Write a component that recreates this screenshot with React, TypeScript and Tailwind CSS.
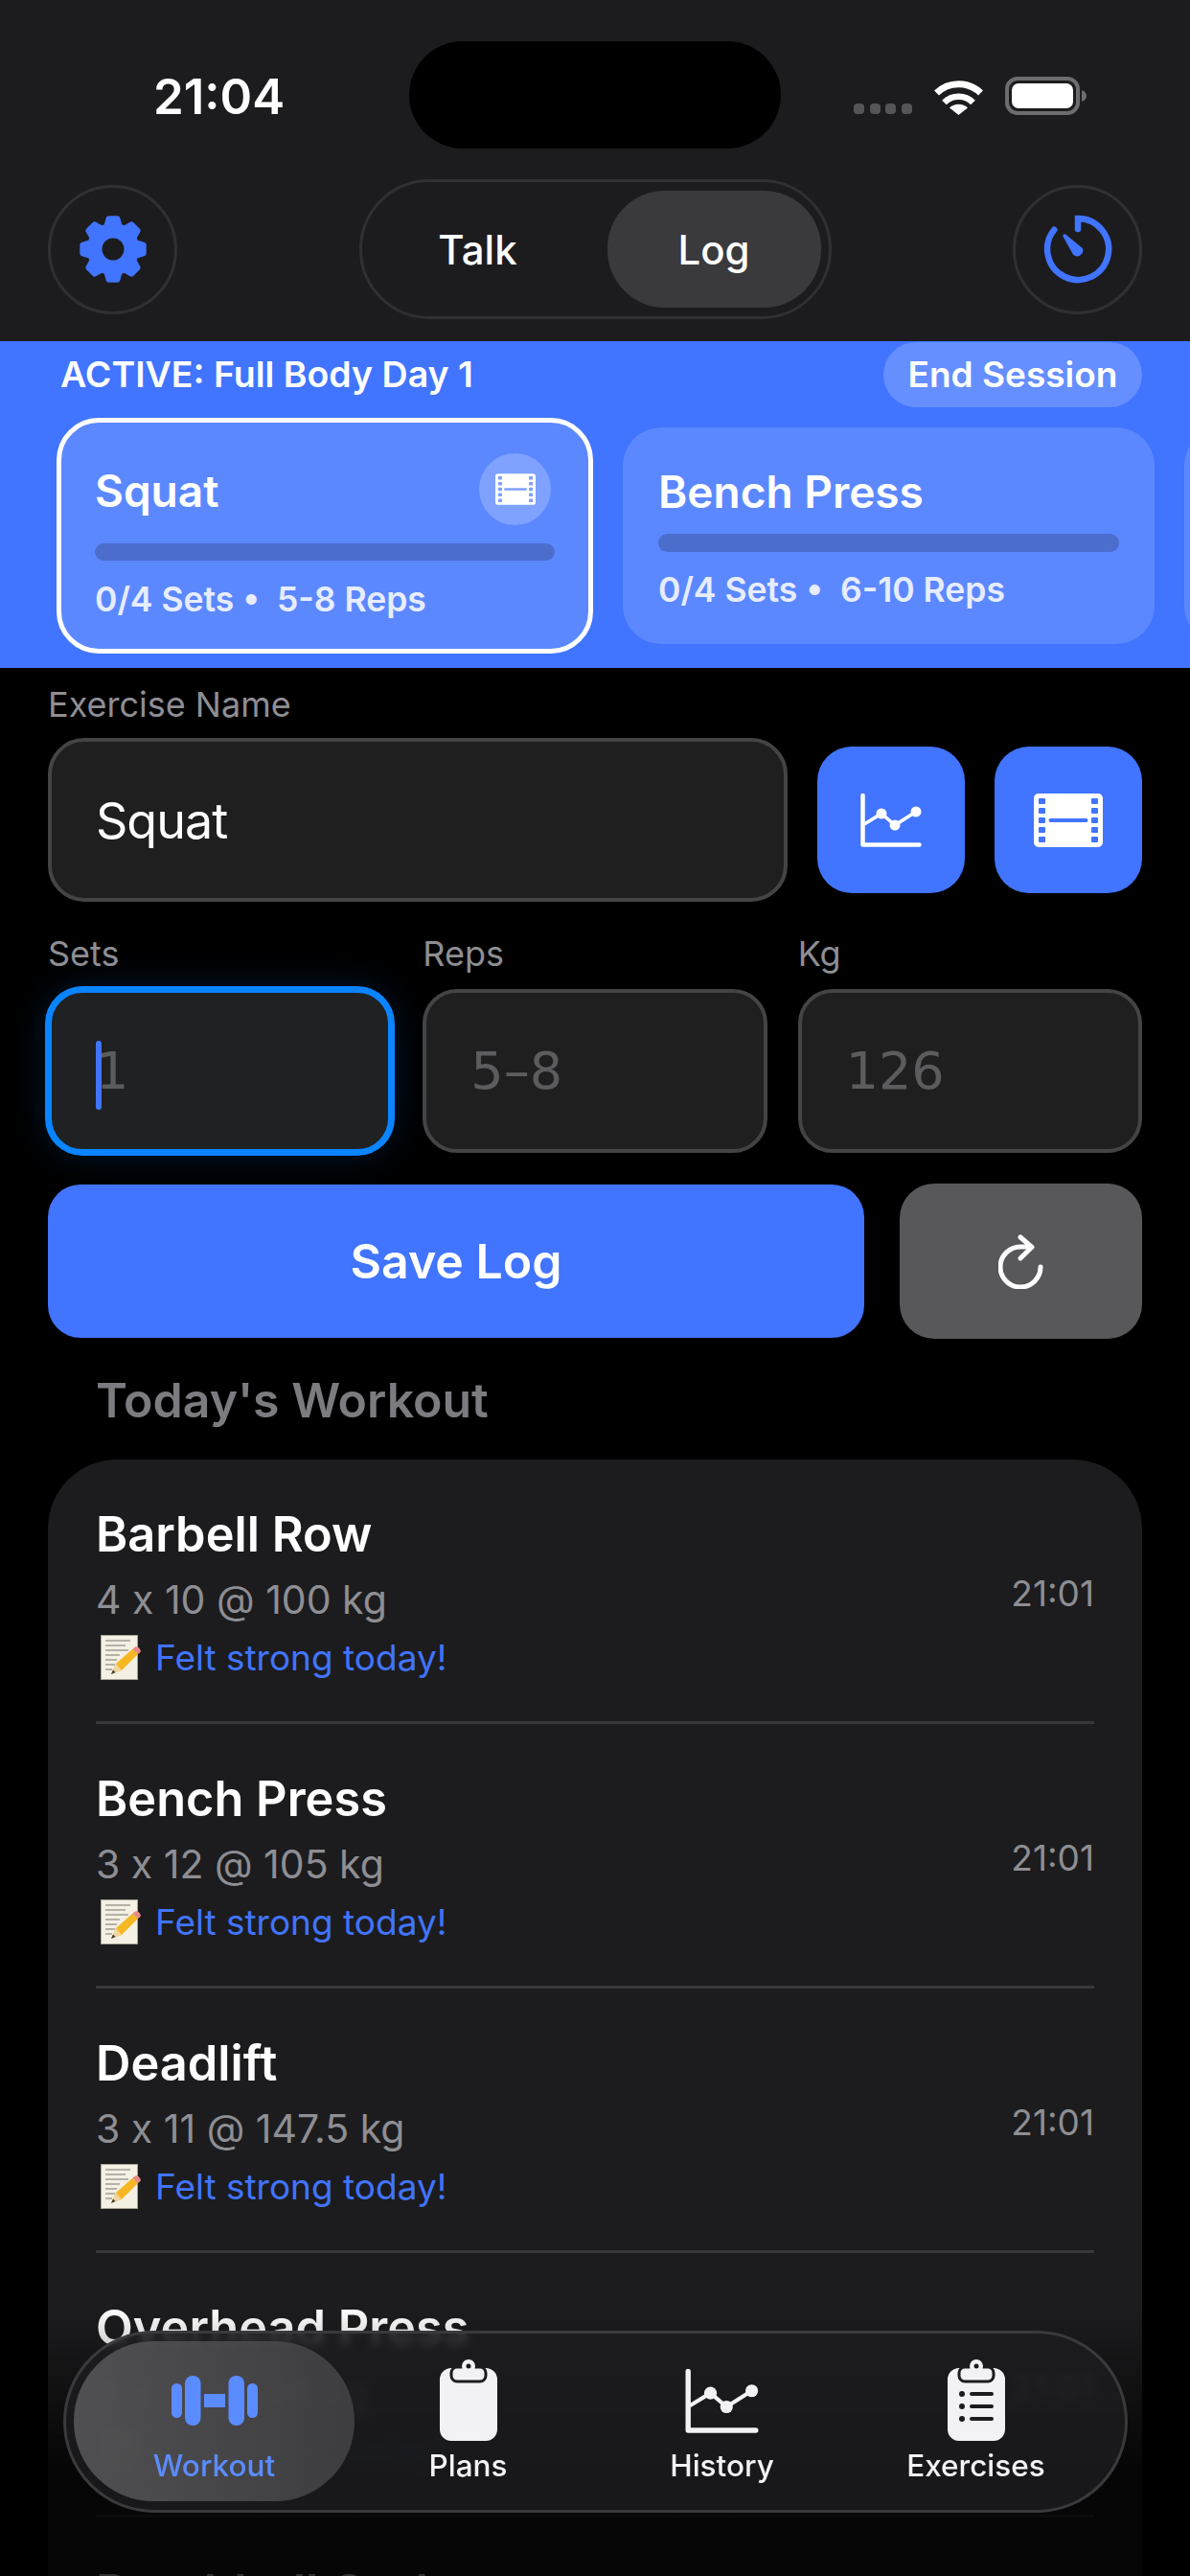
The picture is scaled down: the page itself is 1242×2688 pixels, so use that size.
import React from "react";

const gearPath = () => {
  const pts: string[] = [];
  const cx = 36;
  const cy = 36;
  for (let i = 0; i < 8; i++) {
    const a = (i * Math.PI) / 4 - Math.PI / 2;
    const p = (r: number, d: number) => {
      const t = a + (d * Math.PI) / 180;
      return `${(cx + r * Math.cos(t)).toFixed(2)} ${(cy + r * Math.sin(t)).toFixed(2)}`;
    };
    pts.push(p(24.5, -16), p(32, -8), p(32, 8), p(24.5, 16));
  }
  return `M${pts.join("L")}Z`;
};

const GearIcon = () => (
  <svg width="72" height="72" viewBox="0 0 72 72">
    <path d={gearPath()} fill="#4174ff" stroke="#4174ff" strokeWidth="6" strokeLinejoin="round" />
    <circle cx="36" cy="36" r="11.5" fill="#1c1c1e" />
  </svg>
);

const TimerIcon = () => (
  <svg width="72" height="72" viewBox="0 0 72 72" fill="none">
    <path d="M36 15V4A32 32 0 1 1 11.3 15.8" stroke="#4174ff" strokeWidth="6.5" strokeLinecap="round" />
    <path d="M21 20.5Q19.8 21.5 20.7 23.2L31 41.5A6 6 0 0 0 40.8 35L23.5 20.8Q22 19.8 21 20.5Z" fill="#4174ff" />
  </svg>
);

const WifiIcon = () => (
  <svg width="53" height="38" viewBox="0 0 53 38" fill="none">
    <path d="M3.5 15A33 33 0 0 1 49.5 15" stroke="white" strokeWidth="7" />
    <path d="M11.5 25A21 21 0 0 1 41.5 25" stroke="white" strokeWidth="6.5" />
    <path d="M26.5 38L17 30.5A14 14 0 0 1 36 30.5Z" fill="white" />
  </svg>
);

const BatteryIcon = () => (
  <svg width="85" height="40" viewBox="0 0 85 40" fill="none">
    <rect x="2" y="2" width="74" height="36" rx="11" stroke="#6d6d70" strokeWidth="4" />
    <rect x="7" y="7" width="64" height="26" rx="7" fill="white" />
    <path d="M80 14Q85 16 85 20Q85 24 80 26Z" fill="#6d6d70" />
  </svg>
);

const FilmIcon = ({ width, height, hole }: { width: number; height: number; hole: string }) => (
  <svg width={width} height={height} viewBox="0 0 72 56">
    <rect width="72" height="56" rx="5" fill="white" />
    {[5, 15, 25, 35, 45].map((y) => (
      <g key={y} fill={hole}>
        <rect x="5" y={y} width="7" height="6" rx="1" />
        <rect x="60" y={y} width="7" height="6" rx="1" />
      </g>
    ))}
    <rect x="15.5" y="26" width="41" height="4" rx="2" fill={hole} />
  </svg>
);

const ChartIcon = ({ width, height, color = "white" }: { width: number; height: number; color?: string }) => (
  <svg width={width} height={height} viewBox="0 0 64 56" fill="none">
    <path d="M2.5 2V53.5H61.5" stroke={color} strokeWidth="4.5" strokeLinecap="round" strokeLinejoin="round" />
    <path d="M4 32L22 21L36 33L58 19" stroke={color} strokeWidth="3.5" />
    <circle cx="22" cy="21" r="5.5" fill={color} />
    <circle cx="36" cy="33" r="5.5" fill={color} />
    <circle cx="58" cy="19" r="5.5" fill={color} />
  </svg>
);

const ResetIcon = () => (
  <svg width="47" height="57" viewBox="0 0 47 57" fill="none">
    <path d="M44 34A21 21 0 1 1 23.5 13H33" stroke="white" strokeWidth="5" strokeLinecap="round" />
    <path d="M23 3L35 13.3L23 25" stroke="white" strokeWidth="5" strokeLinecap="round" strokeLinejoin="round" />
  </svg>
);

const DumbbellIcon = () => (
  <svg width="90" height="52" viewBox="0 0 90 52" fill="#5b8cff">
    <rect x="0" y="8" width="11" height="36" rx="5.5" />
    <rect x="14" y="0" width="16.5" height="52" rx="8" />
    <rect x="34" y="19" width="22" height="14" />
    <rect x="59.5" y="0" width="16.5" height="52" rx="8" />
    <rect x="79" y="8" width="11" height="36" rx="5.5" />
  </svg>
);

const ClipboardIcon = ({ list }: { list?: boolean }) => (
  <svg width="60" height="86" viewBox="0 0 60 86">
    <rect x="0" y="9" width="60" height="76" rx="12" fill="#f2f2f4" />
    <rect x="12" y="8" width="36" height="15" rx="6" fill="#f2f2f4" stroke="#1c1c1e" strokeWidth="3" />
    <circle cx="30" cy="7" r="7" fill="#f2f2f4" />
    <circle cx="30" cy="7" r="2.5" fill="#1c1c1e" />
    {list &&
      [36, 49, 62].map((y) => (
        <g key={y} fill="#1c1c1e">
          <circle cx="15" cy={y} r="3" />
          <rect x="23" y={y - 2} width="25" height="4" rx="2" />
        </g>
      ))}
  </svg>
);

const MemoIcon = () => (
  <svg width="43" height="47" viewBox="0 0 43 47" className="shrink-0">
    <rect x="0.5" y="0.5" width="38" height="46" fill="#f4f0e4" stroke="#a8a496" strokeWidth="1" />
    <path d="M5 6H31M5 11H26M5 16H29M5 21H20M5 26H17M5 31H15M5 36H12" stroke="#77756c" strokeWidth="1" />
    <path d="M11 41L16 30L33 15L39 20L22 37Z" fill="#f5b822" />
    <path d="M11 41L16 30L22 37Z" fill="#f2d6a2" />
    <path d="M11 41L13 36.5L15.5 39Z" fill="#3d3a33" />
    <path d="M33 15L36 12.5Q38 11.5 40 13.5L41.5 15.5Q42.5 17.5 41 18.5L39 20Z" fill="#e88b84" />
  </svg>
);

const Field = ({ label, value, focused }: { label: string; value: string; focused?: boolean }) => (
  <div className="flex flex-1 flex-col">
    <span className="mb-[15px] text-[36px] leading-[44px] text-[#8e8e93]">{label}</span>
    <div
      className={
        focused
          ? "relative flex h-[171px] items-center rounded-[36px] border-[4px] border-[#0a84ff] bg-[#1f2123] pl-[46px] shadow-[0_0_0_3px_#0a84ff,0_0_40px_rgba(10,132,255,0.2)]"
          : "relative flex h-[171px] items-center rounded-[36px] border-[4px] border-[#444446] bg-[#1f1f1f] pl-[46px]"
      }
    >
      <span className="font-[family-name:'DejaVu_Sans',sans-serif] text-[54px] text-[#5c5c5f]">{value}</span>
      {focused && <div className="absolute left-[46px] top-[50px] h-[72px] w-[6px] rounded-full bg-[#4174ff]" />}
    </div>
  </div>
);

const rows = [
  { name: "Barbell Row", detail: "4 x 10 @ 100 kg" },
  { name: "Bench Press", detail: "3 x 12 @ 105 kg" },
  { name: "Deadlift", detail: "3 x 11 @ 147.5 kg" },
  { name: "Overhead Press", detail: "3 x 10 @ 98 kg" },
  { name: "Dumbbell Curl", detail: "3 x 12 @ 20 kg" },
];

const tabs = [
  { label: "Workout", icon: <DumbbellIcon />, active: true },
  { label: "Plans", icon: <ClipboardIcon /> },
  { label: "History", icon: <ChartIcon width={77} height={67} color="#f2f2f4" /> },
  { label: "Exercises", icon: <ClipboardIcon list /> },
];

export default function App() {
  return (
    <div className="relative h-[2688px] w-[1242px] overflow-hidden bg-black font-[family-name:Inter,sans-serif] text-white">
      {/* Header */}
      <div className="h-[356px] bg-[#1c1c1e]">
        <div className="flex h-[187px]">
          <div className="w-[427px] pl-[30px] pt-[70px] text-center text-[51px] font-semibold leading-[62px]">21:04</div>
          <div className="mt-[43px] h-[112px] w-[388px] rounded-[56px] bg-black" />
          <div className="flex h-[120px] items-end gap-[22px] pl-[76px]">
            <div className="mb-px flex gap-[5.5px]">
              {[0, 1, 2, 3].map((i) => (
                <div key={i} className="h-[11px] w-[11px] rounded-[4px] bg-[#555558]" />
              ))}
            </div>
            <div className="flex items-end gap-[22px]">
              <WifiIcon />
              <BatteryIcon />
            </div>
          </div>
        </div>
        <div className="flex h-[146px] items-center justify-between px-[50px]">
          <div className="flex h-[135px] w-[135px] items-center justify-center rounded-full border-[3px] border-[#303032]">
            <GearIcon />
          </div>
          <div className="flex h-[146px] w-[493px] items-center justify-between rounded-full border-[3px] border-[#303032] pr-[8px]">
            <span className="w-[242px] text-center text-[42px] font-medium">Talk</span>
            <div className="flex h-[122px] w-[223px] items-center justify-center rounded-[60px] bg-[#3a3a3c] text-[42px] font-medium">
              Log
            </div>
          </div>
          <div className="flex h-[135px] w-[135px] items-center justify-center rounded-full border-[3px] border-[#303032]">
            <TimerIcon />
          </div>
        </div>
      </div>

      {/* Active session banner */}
      <div className="h-[341px] overflow-hidden bg-[#4174ff]">
        <div className="flex h-[69px] items-center justify-between pl-[63px] pr-[50px] pt-px">
          <span className="text-[37.5px] font-semibold">ACTIVE: Full Body Day 1</span>
          <div className="flex h-[68px] w-[270px] items-center justify-center rounded-[34px] bg-[#658eff] text-[37px] font-semibold">
            End Session
          </div>
        </div>
        <div className="ml-[59px] mt-[11px] flex w-[1300px] items-center gap-[31px]">
          <div className="h-[246px] w-[560px] shrink-0 rounded-[44px] border-[5px] border-white bg-[#5c88ff] px-[35px] pt-[32px]">
            <div className="flex h-[75px] items-center justify-between pr-[4px]">
              <span className="pt-[4px] text-[46px] font-semibold">Squat</span>
              <div className="flex h-[75px] w-[75px] items-center justify-center rounded-full bg-[#7fa1ff]">
                <FilmIcon width={42} height={33} hole="#7fa1ff" />
              </div>
            </div>
            <div className="mt-[19px] h-[18px] rounded-full bg-[#4b6dcc]" />
            <div className="mt-[20px] text-[35.5px] font-semibold leading-[42px] text-white/85">0/4 Sets •&nbsp; 5-8 Reps</div>
          </div>
          <div className="h-[226px] w-[555px] shrink-0 rounded-[40px] bg-[#5c88ff] px-[37px] pt-[29px]">
            <div className="text-[46px] font-semibold leading-[76px]">Bench Press</div>
            <div className="mt-[6px] h-[19px] rounded-full bg-[#4b6dcc]" />
            <div className="mt-[19px] text-[35.5px] font-semibold leading-[42px] text-white/85">0/4 Sets •&nbsp; 6-10 Reps</div>
          </div>
          <div className="h-[226px] w-[100px] shrink-0 rounded-[40px] bg-[#5c88ff]" />
        </div>
      </div>

      {/* Log form */}
      <div className="px-[50px]">
        <div className="pt-[16px] text-[36px] leading-[44px] text-[#8e8e93]">Exercise Name</div>
        <div className="mt-[13px] flex items-center">
          <div className="flex h-[171px] w-[772px] items-center rounded-[38px] border-[4px] border-[#444446] bg-[#1f1f1f] pl-[46px] pt-[3px] text-[52px] tracking-[-1px]">
            Squat
          </div>
          <div className="ml-[31px] flex h-[153px] w-[154px] items-center justify-center rounded-[36px] bg-[#4174ff]">
            <ChartIcon width={64} height={56} />
          </div>
          <div className="ml-[31px] flex h-[153px] w-[154px] items-center justify-center rounded-[36px] bg-[#4174ff]">
            <FilmIcon width={72} height={56} hole="#4174ff" />
          </div>
        </div>
        <div className="mt-[32px] flex gap-[32px]">
          <Field label="Sets" value="1" focused />
          <Field label="Reps" value="5–8" />
          <Field label="Kg" value="126" />
        </div>
        <div className="mt-[32px] flex items-center gap-[37px]">
          <div className="flex h-[160px] w-[852px] items-center justify-center rounded-[34px] bg-[#4174ff] text-[50px] font-semibold">
            Save Log
          </div>
          <div className="flex h-[162px] w-[253px] items-center justify-center rounded-[36px] bg-[#58585a]">
            <ResetIcon />
          </div>
        </div>
        <div className="ml-[50px] mt-[33px] text-[50px] font-semibold leading-[62px] text-[#7c7c80]">Today's Workout</div>
      </div>

      {/* Logged sets */}
      <div className="mx-[50px] mt-[31px] rounded-[72px] bg-[#1c1c1e] px-[50px]">
        {rows.map((row) => (
          <div key={row.name} className="flex h-[276px] items-center justify-between border-b-[3px] border-[#38383a] pt-[6px]">
            <div className="flex flex-col">
              <span className="text-[50.5px] font-semibold leading-[60px]">{row.name}</span>
              <span className="mt-[13px] text-[41px] leading-[50px] text-[#8e8e93] [font-feature-settings:'calt'_0]">{row.detail}</span>
              <div className="mt-[11px] flex items-center gap-[14px] pl-[5px]">
                <MemoIcon />
                <span className="text-[37px] leading-[50px] text-[#4174ff]">Felt strong today!</span>
              </div>
            </div>
            <span className="text-[37px] text-[#8e8e93]">21:01</span>
          </div>
        ))}
      </div>

      {/* Fade under the tab bar */}
      <div className="absolute inset-x-0 bottom-0 h-[280px] bg-gradient-to-b from-transparent via-black/80 via-60% to-black/80" />

      {/* Tab bar */}
      <div className="absolute bottom-[66px] left-[66px] flex h-[190px] w-[1111px] items-center rounded-[95px] border-[3px] border-[#3a3a3c] bg-[#1c1c1e]/85 pl-[22px] backdrop-blur-[5px]">
        <div className="absolute left-[8px] top-[8px] h-[167px] w-[293px] rounded-[84px] bg-gradient-to-r from-[#5a5a5c]/85 to-[#444446]/85" />
        {tabs.map((tab) => (
          <div key={tab.label} className="relative flex w-[265px] flex-col items-center">
            <div className="flex h-[88px] items-center justify-center">{tab.icon}</div>
            <span className={tab.active ? "mt-[4px] text-[31.5px] font-medium leading-[40px] text-[#5b8cff]" : "mt-[4px] text-[31.5px] font-medium leading-[40px] text-[#f2f2f4]"}>
              {tab.label}
            </span>
          </div>
        ))}
      </div>
    </div>
  );
}
